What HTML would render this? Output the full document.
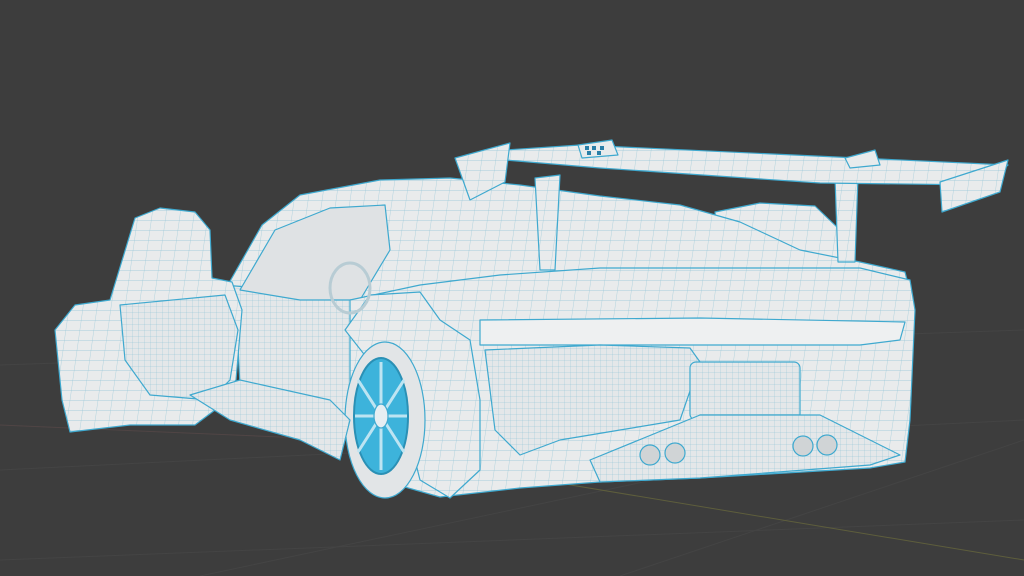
<!DOCTYPE html>
<html><head><style>
html,body{margin:0;padding:0;background:#3d3d3d;width:1024px;height:576px;overflow:hidden}
svg{display:block}
</style></head><body>
<svg width="1024" height="576" viewBox="0 0 1024 576" xmlns="http://www.w3.org/2000/svg">
<defs>
<pattern id="w" width="14" height="10" patternUnits="userSpaceOnUse" patternTransform="skewX(-8)">
<rect width="14" height="10" fill="#e9ebec"/>
<path d="M0 0H14M0 0V10" stroke="#8fc4d6" stroke-width="0.6"/>
</pattern>
<pattern id="w2" width="6" height="6" patternUnits="userSpaceOnUse">
<rect width="6" height="6" fill="#e4e7e9"/>
<path d="M0 0H6M0 0V6" stroke="#8cc2d4" stroke-width="0.5"/>
</pattern>
</defs>
<rect width="1024" height="576" fill="#3d3d3d"/>
<g stroke="#444" stroke-width="1" fill="none">
<path d="M0 365 L1024 330"/><path d="M0 470 L1024 420"/><path d="M0 560 L1024 520"/>
<path d="M620 576 L1024 440"/><path d="M200 576 L700 470"/>
</g>
<path d="M480 470 L1024 560" stroke="#5e5e3c" stroke-width="1"/>
<path d="M0 425 L350 440" stroke="#504545" stroke-width="1"/>
<g stroke="#3fa9cf" stroke-width="1.2" stroke-linejoin="round">
<polygon points="715,212 760,203 815,206 840,230 845,262 720,262" fill="url(#w)"/>
<polygon points="225,290 262,225 300,195 380,180 450,178 520,185 600,196 680,205 740,222 800,250 860,262 905,272 912,300 905,325 860,320 700,318 480,315 380,305 300,300" fill="url(#w)"/>
<!-- interior fill -->
<polygon points="222,285 355,295 350,420 330,405 240,385 236,310" fill="url(#w2)"/>
<polygon points="240,290 275,230 330,208 385,205 390,250 360,300 300,300" fill="#dfe2e4"/>
<polygon points="350,300 420,285 500,275 600,268 700,268 860,268 910,280 915,310 910,420 905,462 870,468 700,478 600,482 520,488 440,497 380,480 350,430" fill="url(#w)"/>
<polygon points="480,320 700,318 905,322 900,340 860,345 700,345 480,345" fill="#eef0f1"/>
<polygon points="485,350 600,345 690,348 700,362 680,420 620,430 560,440 520,455 495,430" fill="url(#w2)"/>
<rect x="690" y="362" width="110" height="58" rx="6" fill="url(#w2)"/>
<polygon points="590,460 700,415 820,415 900,455 870,465 700,478 600,482" fill="url(#w2)"/>
<g fill="#d0d4d6">
<ellipse cx="650" cy="455" rx="10" ry="10"/><ellipse cx="675" cy="453" rx="10" ry="10"/>
<ellipse cx="803" cy="446" rx="10" ry="10"/><ellipse cx="827" cy="445" rx="10" ry="10"/>
</g>
<polygon points="345,330 370,295 420,292 440,320 470,340 480,400 480,470 450,498 420,480 400,400" fill="url(#w)"/>
<ellipse cx="385" cy="420" rx="40" ry="78" fill="#e2e5e7"/>
<ellipse cx="381" cy="416" rx="27" ry="58" fill="#3db3db" stroke="#2a90b5" stroke-width="2"/>
<g stroke="#bde4f2" stroke-width="3">
<path d="M381 416 L381 362M381 416 L381 470M381 416 L358 380M381 416 L404 380M381 416 L358 452M381 416 L404 452M381 416 L355 416M381 416 L407 416"/>
</g>
<ellipse cx="381" cy="416" rx="7" ry="12" fill="#e6eef2"/>
<polygon points="55,330 75,305 110,300 135,218 160,208 195,212 210,230 212,278 232,282 242,310 236,380 215,410 195,425 130,425 70,432 62,400" fill="url(#w)"/>
<polygon points="120,305 225,295 238,330 230,380 210,400 150,395 125,360" fill="url(#w2)"/>
<polygon points="190,395 240,380 330,400 350,420 340,460 300,440 230,420" fill="url(#w2)"/>
<ellipse cx="350" cy="288" rx="20" ry="25" fill="none" stroke="#b8ccd4" stroke-width="3"/>
<polygon points="535,178 560,175 555,270 540,270" fill="url(#w)"/>
<polygon points="835,178 858,176 855,262 838,262" fill="url(#w)"/>
<polygon points="505,150 580,145 1008,165 985,185 820,183 600,168 505,160" fill="url(#w)"/>
<polygon points="455,158 510,143 505,182 470,200" fill="url(#w)"/>
<polygon points="940,182 1008,160 1000,192 942,212" fill="url(#w)"/>
<polygon points="578,145 612,140 618,155 582,158" fill="#e8ebec"/>
<polygon points="845,158 875,150 880,165 850,168" fill="#e8ebec"/>
</g>
<g fill="#2a7fa8"><rect x="585" y="146" width="4" height="4"/><rect x="592" y="146" width="4" height="4"/><rect x="600" y="146" width="4" height="4"/><rect x="587" y="151" width="4" height="4"/><rect x="597" y="151" width="4" height="4"/></g>
</svg>
</body></html>
